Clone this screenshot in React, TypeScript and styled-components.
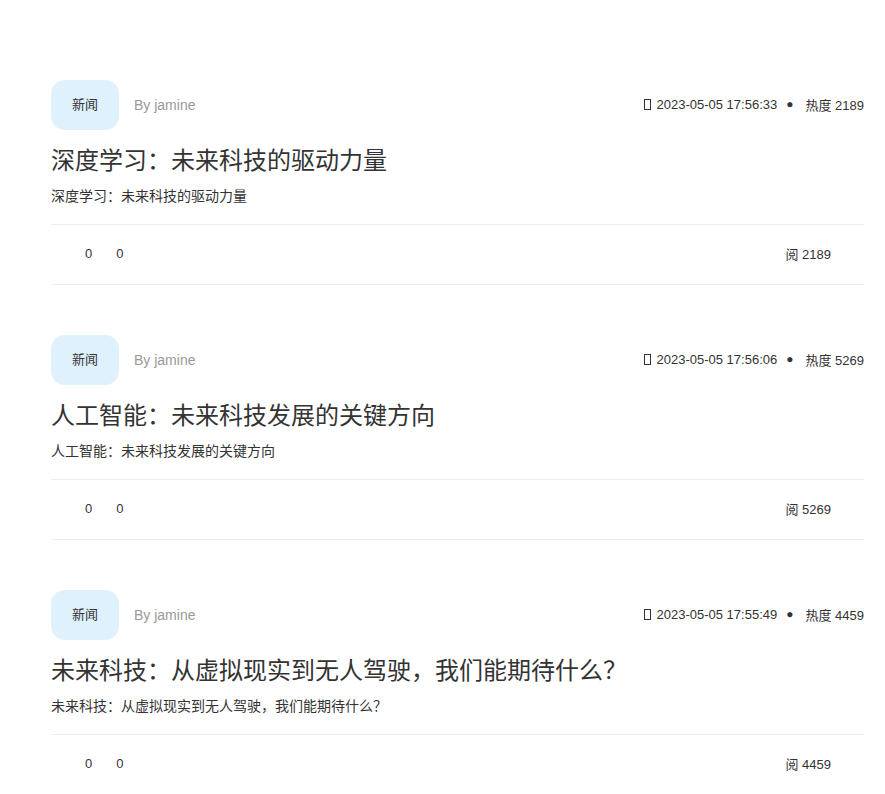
import React from "react";
import styled, { createGlobalStyle } from "styled-components";

const GlobalStyle = createGlobalStyle`
  body {
    margin: 0;
    background: #fff;
    font-family: "Liberation Sans", "Noto Sans CJK SC", sans-serif;
    color: #333;
  }
`;

const Container = styled.div`
  padding: 80px 21px 0 51px;
`;

const Card = styled.article`
  margin-bottom: 50px;
`;

const Header = styled.div`
  display: flex;
  align-items: center;
  height: 50px;
`;

const Badge = styled.span`
  display: flex;
  align-items: center;
  justify-content: center;
  width: 68px;
  height: 50px;
  padding-bottom: 3px;
  box-sizing: border-box;
  border-radius: 14px;
  background: #e0f1fe;
  font-size: 13px;
  color: #333;
`;

const Author = styled.span`
  margin-left: 15px;
  font-size: 14px;
  color: #999;
`;

const Meta = styled.div`
  margin-left: auto;
  display: flex;
  align-items: center;
  padding-bottom: 2px;
  font-size: 13px;
  color: #333;
`;

const Tofu = styled.span`
  display: inline-block;
  width: 7px;
  height: 11px;
  border: 1px solid #333;
  margin-right: 5px;
  box-sizing: border-box;
`;

const Dot = styled.span`
  margin: 0 12px 0 9px;
  font-size: 12px;
`;

const Title = styled.h2`
  margin: 13px 0 0;
  font-size: 24px;
  font-weight: 400;
  line-height: 36px;
  color: #333;
`;

const Summary = styled.p`
  margin: 7px 0 0;
  padding-bottom: 18px;
  font-size: 14px;
  line-height: 20px;
  color: #333;
`;

const Footer = styled.div`
  display: flex;
  align-items: center;
  height: 59px;
  padding: 0 31px 2px 34px;
  box-sizing: content-box;
  height: 57px;
  border-top: 1px solid #eee;
  border-bottom: 1px solid #eee;
  font-size: 13px;
`;

const Count = styled.span<{ gap?: number }>`
  margin-left: ${(p) => p.gap ?? 0}px;
`;

const Views = styled.span`
  margin-left: auto;
  margin-right: 2px;
`;

const posts = [
  {
    time: "2023-05-05 17:56:33",
    hot: 2189,
    title: "深度学习：未来科技的驱动力量",
  },
  {
    time: "2023-05-05 17:56:06",
    hot: 5269,
    title: "人工智能：未来科技发展的关键方向",
  },
  {
    time: "2023-05-05 17:55:49",
    hot: 4459,
    title: "未来科技：从虚拟现实到无人驾驶，我们能期待什么？",
  },
];

function App() {
  return (
    <>
      <GlobalStyle />
      <Container>
        {posts.map((post) => (
          <Card key={post.time}>
            <Header>
              <Badge>新闻</Badge>
              <Author>By jamine</Author>
              <Meta>
                <Tofu />
                {post.time}
                <Dot>●</Dot>
                热度 {post.hot}
              </Meta>
            </Header>
            <Title>{post.title}</Title>
            <Summary>{post.title}</Summary>
            <Footer>
              <Count>0</Count>
              <Count gap={24}>0</Count>
              <Views>阅 {post.hot}</Views>
            </Footer>
          </Card>
        ))}
      </Container>
    </>
  );
}

export default App;
